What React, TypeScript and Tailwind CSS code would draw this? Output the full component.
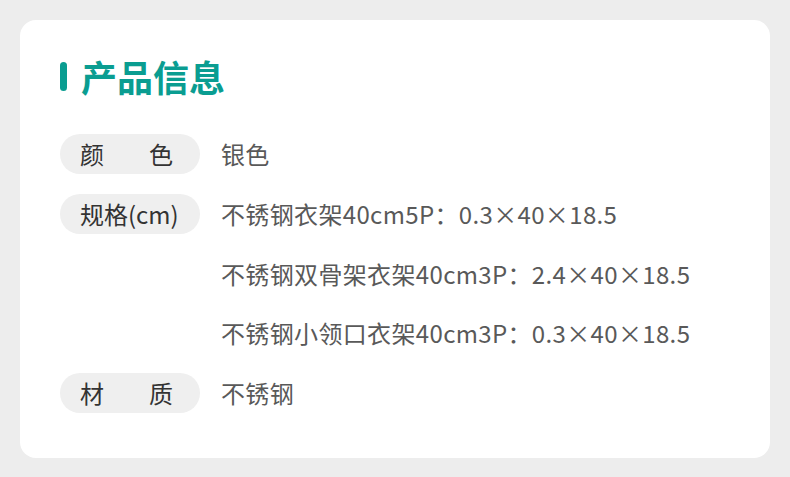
import React from "react";

const font = { fontFamily: '"Noto Sans CJK SC", "Noto Sans", sans-serif' };

function Label({ children, spread }: { children: React.ReactNode; spread?: boolean }) {
  return (
    <div
      className={`flex h-10 w-[140px] shrink-0 items-center rounded-full bg-[#efefef] text-[24px] text-[#333333] ${
        spread ? "justify-between pl-5 pr-[27px]" : "justify-start px-5"
      }`}
    >
      {children}
    </div>
  );
}

function Value({ children }: { children: React.ReactNode }) {
  return <div className="flex h-10 items-center text-[24px] tracking-[0.35px] text-[#595959]">{children}</div>;
}

export default function App() {
  return (
    <div className="h-[477px] w-[790px] bg-[#ededed] p-5" style={font}>
      <div className="h-[438px] w-[750px] rounded-2xl bg-white pl-10 pt-[38px]">
        <div className="flex items-center gap-[14px]">
          <div className="h-[29px] w-[7px] rounded-full bg-[#0a9d91]" />
          <div className="text-[36px] font-bold leading-[36px] text-[#0a9d91]">产品信息</div>
        </div>
        <div className="mt-[40px] flex flex-col gap-[19.75px]">
          <div className="flex gap-[21px]">
            <Label spread>
              <span>颜</span>
              <span>色</span>
            </Label>
            <Value>银色</Value>
          </div>
          <div className="flex gap-[21px]">
            <div className="flex flex-col gap-[19.75px]">
              <Label>规格(cm)</Label>
              <div className="h-10" />
              <div className="h-10" />
            </div>
            <div className="flex flex-col gap-[19.75px]">
              <Value>不锈钢衣架40cm5P：0.3×40×18.5</Value>
              <Value>不锈钢双骨架衣架40cm3P：2.4×40×18.5</Value>
              <Value>不锈钢小领口衣架40cm3P：0.3×40×18.5</Value>
            </div>
          </div>
          <div className="flex gap-[21px]">
            <Label spread>
              <span>材</span>
              <span>质</span>
            </Label>
            <Value>不锈钢</Value>
          </div>
        </div>
      </div>
    </div>
  );
}
